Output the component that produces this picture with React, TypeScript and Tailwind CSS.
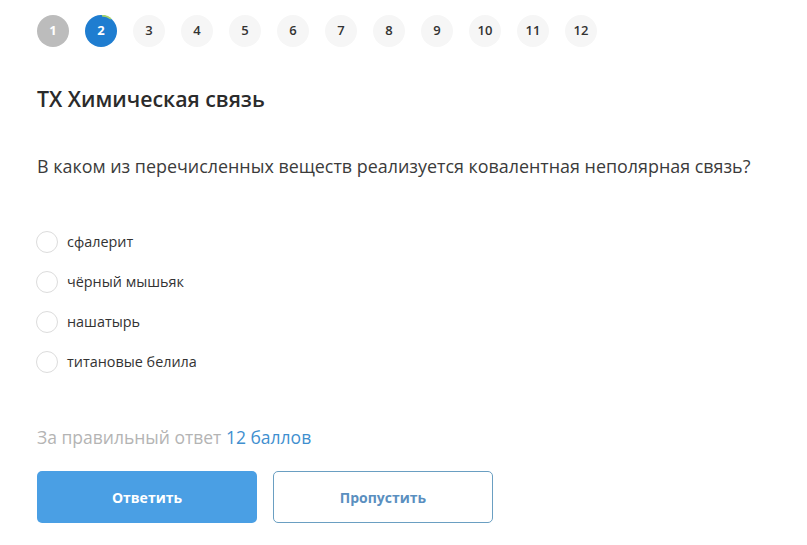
import React from 'react';

const steps = [1, 2, 3, 4, 5, 6, 7, 8, 9, 10, 11, 12];
const options = ['сфалерит', 'чёрный мышьяк', 'нашатырь', 'титановые белила'];

const StepCircle: React.FC<{ n: number }> = ({ n }) => {
  if (n === 1) {
    return (
      <div className="w-8 h-8 rounded-full bg-[#bcbcbc] text-white text-[13px] font-bold flex items-center justify-center">
        {n}
      </div>
    );
  }
  if (n === 2) {
    // current question, small green progress arc on top
    return (
      <div className="relative w-8 h-8">
        <div className="absolute inset-0 rounded-full bg-[#1f7dd0] text-white text-[13px] font-bold flex items-center justify-center">
          {n}
        </div>
        <svg className="absolute inset-0" width="32" height="32" viewBox="0 0 32 32">
          <path d="M17 0.6 A15.5 15.5 0 0 1 26 3.8" fill="none" stroke="#a5d26a" strokeWidth="1.6" />
        </svg>
      </div>
    );
  }
  return (
    <div className="w-8 h-8 rounded-full bg-[#f6f6f6] text-[#333] text-[13px] font-semibold flex items-center justify-center">
      {n}
    </div>
  );
};

export default function App() {
  return (
    <div
      className="w-[807px] h-[545px] bg-white overflow-hidden pl-[37px] pt-[15px]"
      style={{ fontFamily: '"Open Sans", "Noto Sans", sans-serif' }}
    >
      <div className="flex gap-4">
        {steps.map((n) => (
          <StepCircle key={n} n={n} />
        ))}
      </div>

      <h1 className="mt-[37px] text-[21.3px] leading-[30px] font-semibold text-[#2b2b2b]">ТХ Химическая связь</h1>

      <p className="mt-[40px] text-[17.9px] leading-[24px] text-[#3b3b3b]">
        В каком из перечисленных веществ реализуется ковалентная неполярная связь?
      </p>

      <div className="mt-[53px] flex flex-col gap-[18px]">
        {options.map((o) => (
          <label key={o} className="flex items-center gap-[9px] h-[22px] -ml-[1px]">
            <span className="w-[22px] h-[22px] rounded-full border border-[#dcdcdc] bg-white" />
            <span className="text-[14.4px] text-[#333]">{o}</span>
          </label>
        ))}
      </div>

      <p className="mt-[52px] text-[17.5px] leading-[24px] text-[#b4b4b4]">
        За правильный ответ <span className="text-[#3f8fcf]">12 баллов</span>
      </p>

      <div className="mt-[22px] flex gap-4">
        <button className="w-[220px] h-[52px] rounded-[5px] bg-[#4a9fe4] text-white text-[14px] font-bold">
          Ответить
        </button>
        <button className="w-[220px] h-[52px] rounded-[5px] border border-[#6a9fc2] bg-white text-[#5a8fc0] text-[14px] font-bold">
          Пропустить
        </button>
      </div>
    </div>
  );
}
